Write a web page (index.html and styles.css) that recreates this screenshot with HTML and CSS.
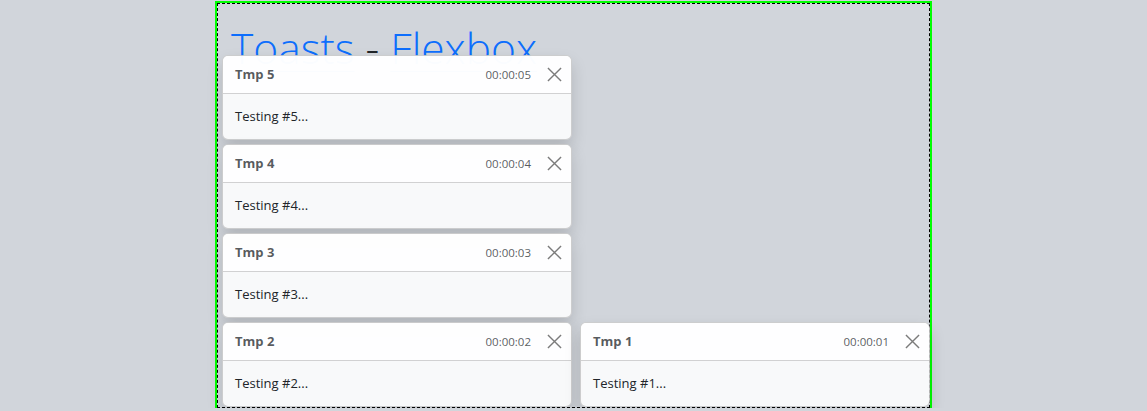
FILE: index.html
```html
<!DOCTYPE html>
<html lang="en">
<head>
<meta charset="utf-8">
<title>Toasts - Flexbox</title>
<link rel="stylesheet" href="styles.css">
</head>
<body>
<div class="frame">
  <h1 class="title"><a href="#">Toasts</a> - <a href="#">Flexbox</a></h1>
  <div class="toast-stack">
    <div class="toast">
      <div class="toast-header"><strong>Tmp 5</strong><small>00:00:05</small><button class="btn-close" aria-label="Close"><svg viewBox="0 0 16 16"><path d="M1 1L15 15M15 1L1 15"/></svg></button></div>
      <div class="toast-body">Testing #5...</div>
    </div>
    <div class="toast">
      <div class="toast-header"><strong>Tmp 4</strong><small>00:00:04</small><button class="btn-close" aria-label="Close"><svg viewBox="0 0 16 16"><path d="M1 1L15 15M15 1L1 15"/></svg></button></div>
      <div class="toast-body">Testing #4...</div>
    </div>
    <div class="toast">
      <div class="toast-header"><strong>Tmp 3</strong><small>00:00:03</small><button class="btn-close" aria-label="Close"><svg viewBox="0 0 16 16"><path d="M1 1L15 15M15 1L1 15"/></svg></button></div>
      <div class="toast-body">Testing #3...</div>
    </div>
    <div class="toast">
      <div class="toast-header"><strong>Tmp 2</strong><small>00:00:02</small><button class="btn-close" aria-label="Close"><svg viewBox="0 0 16 16"><path d="M1 1L15 15M15 1L1 15"/></svg></button></div>
      <div class="toast-body">Testing #2...</div>
    </div>
    <div class="toast">
      <div class="toast-header"><strong>Tmp 1</strong><small>00:00:01</small><button class="btn-close" aria-label="Close"><svg viewBox="0 0 16 16"><path d="M1 1L15 15M15 1L1 15"/></svg></button></div>
      <div class="toast-body">Testing #1...</div>
    </div>
  </div>
</div>
</body>
</html>
```
FILE: styles.css
```css
* { box-sizing: border-box; }
html, body { margin: 0; padding: 0; }
body {
  background: #d1d5db;
  font-family: "Open Sans", "Noto Sans", "Liberation Sans", sans-serif;
  color: #212529;
  font-size: 14px;
}
.frame {
  position: relative;
  width: 713px;
  height: 405px;
  margin: 3px auto 0;
  border: 1px dashed #000;
  outline: 2px solid #00ff00;
}
.title {
  margin: 0;
  padding: 19px 0 0 13px;
  font-family: "Open Sans", sans-serif;
  font-weight: 300;
  font-size: 42.5px;
  line-height: 50px;
  color: #212529;
}
.title a {
  color: #0d6efd;
  text-decoration: underline;
  text-decoration-thickness: 1px;
  text-underline-offset: 7px;
}
.toast-stack {
  position: absolute;
  top: 0;
  bottom: 0;
  left: 4px;
  display: flex;
  flex-direction: column;
  flex-wrap: wrap;
  justify-content: flex-end;
  row-gap: 4px;
  column-gap: 8px;
}
.toast {
  width: 350px;
  background: rgba(255,255,255,.85);
  border: 1px solid rgba(0,0,0,.175);
  border-radius: 6px;
  box-shadow: 0 8px 16px rgba(0,0,0,.15);
  overflow: hidden;
}
.toast-header {
  display: flex;
  align-items: center;
  padding: 8px 12px;
  height: 38px;
  color: rgba(33,37,41,.75);
  background: rgba(255,255,255,.85);
  border-bottom: 1px solid rgba(0,0,0,.175);
  line-height: 21px;
}
.toast-header strong {
  margin-right: auto;
  font-weight: 700;
  font-size: 13px;
}
.toast-header small {
  font-size: 11.5px;
}
.btn-close {
  display: flex;
  align-items: center;
  justify-content: center;
  width: 22px;
  height: 22px;
  margin: 0 -6px 0 12px;
  padding: 0;
  border: 0;
  background: transparent;
}
.btn-close svg {
  width: 15px;
  height: 15px;
  stroke: #7b7b7b;
  stroke-width: 1.5;
  fill: none;
}
.toast-body {
  padding: 12px;
  line-height: 21px;
  height: 45px;
  font-size: 13px;
}
```
